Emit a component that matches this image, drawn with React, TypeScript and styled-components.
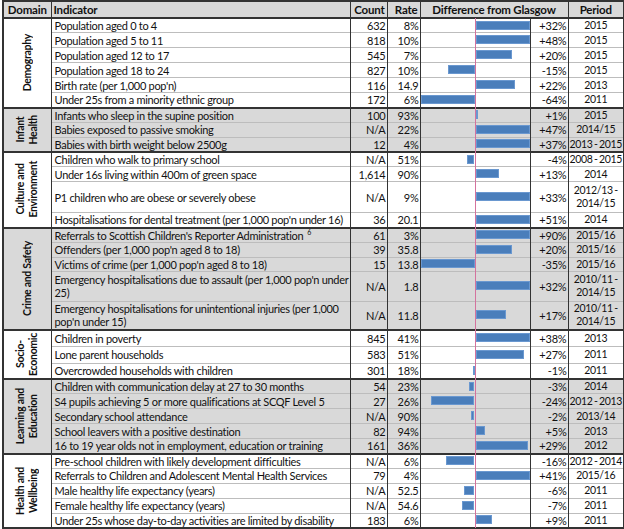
import { Fragment } from "react";
import styled, { createGlobalStyle } from "styled-components";

type Row = {
  text: string;
  sup?: string;
  count: string;
  rate: string;
  diff: number;
  period: string;
  h?: number;
};

type Section = {
  domain: string;
  shaded: boolean;
  rows: Row[];
};

const sections: Section[] = [
  {
    domain: "Demography",
    shaded: false,
    rows: [
      { text: "Population aged 0 to 4", count: "632", rate: "8%", diff: 32, period: "2015" },
      { text: "Population aged 5 to 11", count: "818", rate: "10%", diff: 48, period: "2015" },
      { text: "Population aged 12 to 17", count: "545", rate: "7%", diff: 20, period: "2015" },
      { text: "Population aged 18 to 24", count: "827", rate: "10%", diff: -15, period: "2015" },
      { text: "Birth rate (per 1,000 pop'n)", count: "116", rate: "14.9", diff: 22, period: "2013" },
      { text: "Under 25s from a minority ethnic group", count: "172", rate: "6%", diff: -64, period: "2011" },
    ],
  },
  {
    domain: "Infant\nHealth",
    shaded: true,
    rows: [
      { text: "Infants who sleep in the supine position", count: "100", rate: "93%", diff: 1, period: "2015" },
      { text: "Babies exposed to passive smoking", count: "N/A", rate: "22%", diff: 47, period: "2014/15" },
      { text: "Babies with birth weight below 2500g", count: "12", rate: "4%", diff: 37, period: "2013 - 2015" },
    ],
  },
  {
    domain: "Culture and\nEnvironment",
    shaded: false,
    rows: [
      { text: "Children who walk to primary school", count: "N/A", rate: "51%", diff: -4, period: "2008 - 2015" },
      { text: "Under 16s living within 400m of green space", count: "1,614", rate: "90%", diff: 13, period: "2014" },
      { text: "P1 children who are obese or severely obese", count: "N/A", rate: "9%", diff: 33, period: "2012/13 -\n2014/15", h: 31 },
      { text: "Hospitalisations for dental treatment (per 1,000 pop'n under 16)", count: "36", rate: "20.1", diff: 51, period: "2014" },
    ],
  },
  {
    domain: "Crime and Safety",
    shaded: true,
    rows: [
      { text: "Referrals to Scottish Children's Reporter Administration", sup: "6", count: "61", rate: "3%", diff: 90, period: "2015/16" },
      { text: "Offenders (per 1,000 pop'n aged 8 to 18)", count: "39", rate: "35.8", diff: 20, period: "2015/16" },
      { text: "Victims of crime (per 1,000 pop'n aged 8 to 18)", count: "15", rate: "13.8", diff: -35, period: "2015/16", h: 14 },
      { text: "Emergency hospitalisations due to assault (per 1,000 pop'n under\n25)", count: "N/A", rate: "1.8", diff: 32, period: "2010/11 -\n2014/15", h: 30 },
      { text: "Emergency hospitalisations for unintentional injuries (per 1,000\npop'n under 15)", count: "N/A", rate: "11.8", diff: 17, period: "2010/11 -\n2014/15", h: 29 },
    ],
  },
  {
    domain: "Socio-\nEconomic",
    shaded: false,
    rows: [
      { text: "Children in poverty", count: "845", rate: "41%", diff: 38, period: "2013", h: 17 },
      { text: "Lone parent households", count: "583", rate: "51%", diff: 27, period: "2011", h: 17 },
      { text: "Overcrowded households with children", count: "301", rate: "18%", diff: -1, period: "2011", h: 16 },
    ],
  },
  {
    domain: "Learning and\nEducation",
    shaded: true,
    rows: [
      { text: "Children with communication delay at 27 to 30 months", count: "54", rate: "23%", diff: -3, period: "2014" },
      { text: "S4 pupils achieving 5 or more qualifications at SCQF Level 5", count: "27", rate: "26%", diff: -24, period: "2012 - 2013" },
      { text: "Secondary school attendance", count: "N/A", rate: "90%", diff: -2, period: "2013/14" },
      { text: "School leavers with a positive destination", count: "82", rate: "94%", diff: 5, period: "2013" },
      { text: "16 to 19 year olds not in employment, education or training", count: "161", rate: "36%", diff: 29, period: "2012" },
    ],
  },
  {
    domain: "Health and\nWellbeing",
    shaded: false,
    rows: [
      { text: "Pre-school children with likely development difficulties", count: "N/A", rate: "6%", diff: -16, period: "2012 - 2014" },
      { text: "Referrals to Children and Adolescent Mental Health Services", count: "79", rate: "4%", diff: 41, period: "2015/16" },
      { text: "Male healthy life expectancy (years)", count: "N/A", rate: "52.5", diff: -6, period: "2011" },
      { text: "Female healthy life expectancy (years)", count: "N/A", rate: "54.6", diff: -7, period: "2011" },
      { text: "Under 25s whose day-to-day activities are limited by disability", count: "183", rate: "6%", diff: 9, period: "2011" },
    ],
  },
];

// px per percentage point, bars are clipped at the cell edge
const SCALE = 1.8;
const CENTER = 54;
const MAX = 54;

const GlobalStyle = createGlobalStyle`
  body {
    margin: 0;
    background: #fff;
    font-family: Lato, "Open Sans", sans-serif;
    color: #111;
  }
`;

const Page = styled.div`
  padding: 0 1px 0 2px;
`;

const Table = styled.table`
  border-collapse: collapse;
  table-layout: fixed;
  width: 621px;
  font-size: 11px;
  letter-spacing: -0.2px;
  line-height: 13px;
  border: 2px solid #333;
`;

const Head = styled.th<{ $align?: string }>`
  height: 15px;
  padding: 0 2px;
  background: #d9d9d9;
  font-weight: 700;
  font-size: 11.5px;
  line-height: 14px;
  text-align: ${(p) => p.$align || "center"};
  border: 1.5px solid #333;
  border-bottom: 2px solid #333;
  white-space: nowrap;
  overflow: hidden;
`;

const Tr = styled.tr<{ $shaded: boolean; $first: boolean }>`
  background: ${(p) => (p.$shaded ? "#d9d9d9" : "#fff")};
  & > td {
    border-top: ${(p) => (p.$first ? "2px solid #333" : "1px solid #bdbdbd")};
  }
`;

const Domain = styled.td`
  padding: 0;
  border-left: 2px solid #333;
  border-right: 1.5px solid #333;
  text-align: center;
  vertical-align: middle;
`;

const DomainLabel = styled.div`
  writing-mode: vertical-rl;
  transform: rotate(180deg);
  font-weight: 700;
  font-size: 10.5px;
  letter-spacing: -0.3px;
  white-space: pre;
  line-height: 13px;
  margin: 0 auto;
`;

const Indicator = styled.td`
  padding: 0 2px 0 3px;
  white-space: pre;
  overflow: hidden;
  letter-spacing: -0.3px;
  vertical-align: middle;
  border-right: 1.5px solid #333;
`;

const Sup = styled.sup`
  font-size: 7px;
  line-height: 0;
  margin-left: 4px;
  vertical-align: 5px;
`;

const Num = styled.td`
  padding: 0 1px 0 0;
  text-align: right;
  vertical-align: middle;
  border-right: 1.5px solid #333;
  white-space: nowrap;
`;

const BarCell = styled.td`
  position: relative;
  padding: 0;
  border-right: 1.5px solid #333;
`;

const CenterLine = styled.div`
  position: absolute;
  top: -1px;
  bottom: -1px;
  left: ${CENTER}px;
  width: 1px;
  background: #d4739e;
`;

const Bar = styled.div`
  position: absolute;
  top: 50%;
  height: 9px;
  margin-top: -5px;
  background: #4a7ebb;
  border: 1px solid #6a98d0;
  box-sizing: border-box;
`;

const Period = styled.td`
  padding: 0;
  text-align: center;
  vertical-align: middle;
  white-space: pre;
  font-size: 10.5px;
  letter-spacing: -0.3px;
  word-spacing: -1px;
  line-height: 13px;
`;

const barStyle = (diff: number) => {
  const w = Math.max(2, Math.min(MAX, Math.abs(diff) * SCALE));
  return diff >= 0 ? { left: CENTER + 1, width: w } : { left: CENTER - w, width: w };
};

export default function App() {
  return (
    <Page>
      <GlobalStyle />
      <Table>
        <colgroup>
          <col style={{ width: 48 }} />
          <col style={{ width: 299 }} />
          <col style={{ width: 37 }} />
          <col style={{ width: 33 }} />
          <col style={{ width: 110 }} />
          <col style={{ width: 38 }} />
          <col style={{ width: 56 }} />
        </colgroup>
        <thead>
          <tr>
            <Head>Domain</Head>
            <Head $align="left">Indicator</Head>
            <Head $align="right">Count</Head>
            <Head $align="right">Rate</Head>
            <Head colSpan={2}>Difference from Glasgow</Head>
            <Head>Period</Head>
          </tr>
        </thead>
        <tbody>
          {sections.map((s) => (
            <Fragment key={s.domain}>
              {s.rows.map((r, i) => (
                <Tr
                  key={r.text}
                  $shaded={s.shaded}
                  $first={i === 0}
                  style={{ height: (r.h ?? 15) - (i === 0 ? 1 : 0) }}
                >
                  {i === 0 && (
                    <Domain rowSpan={s.rows.length}>
                      <DomainLabel>{s.domain}</DomainLabel>
                    </Domain>
                  )}
                  <Indicator>
                    {r.text}
                    {r.sup && <Sup>{r.sup}</Sup>}
                  </Indicator>
                  <Num>{r.count}</Num>
                  <Num>{r.rate}</Num>
                  <BarCell>
                    <CenterLine />
                    <Bar style={barStyle(r.diff)} />
                  </BarCell>
                  <Num>{(r.diff > 0 ? "+" : "") + r.diff + "%"}</Num>
                  <Period>{r.period}</Period>
                </Tr>
              ))}
            </Fragment>
          ))}
        </tbody>
      </Table>
    </Page>
  );
}
